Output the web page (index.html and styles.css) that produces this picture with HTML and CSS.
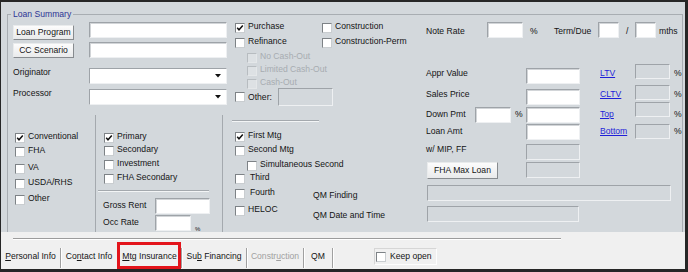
FILE: index.html
```html
<!DOCTYPE html>
<html lang="en">
<head>
    <meta charset="UTF-8">
    <title>Loan Summary</title>
    <link rel="stylesheet" href="styles.css">
</head>
<body>
<div id="window">
    <div id="panel">
        <fieldset id="loan-summary">
            <legend>Loan Summary</legend>
            <div class="columns">

                <div class="col-left">
                    <div class="lrow row-program">
                        <button class="btn program">Loan Program</button>
                        <input class="text wide" type="text">
                    </div>
                    <div class="lrow row-scenario">
                        <button class="btn program">CC Scenario</button>
                        <input class="text wide" type="text">
                    </div>
                    <div class="lrow row-originator">
                        <span class="lbl">Originator</span>
                        <div class="combo"><svg width="6" height="4" viewBox="0 0 6 4"><polygon points="0,0 6,0 3,3.5" fill="#111"/></svg></div>
                    </div>
                    <div class="lrow row-processor">
                        <span class="lbl">Processor</span>
                        <div class="combo"><svg width="6" height="4" viewBox="0 0 6 4"><polygon points="0,0 6,0 3,3.5" fill="#111"/></svg></div>
                    </div>
                    <div class="groups">
                        <div class="loan-type">
                            <div class="check"><span class="box"><svg width="8" height="8" viewBox="0 0 8 8"><polyline points="1.2,3.8 3,5.8 6.8,1.5" fill="none" stroke="#111" stroke-width="1.5"/></svg></span>Conventional</div>
                            <div class="check"><span class="box"></span>FHA</div>
                            <div class="check"><span class="box"></span>VA</div>
                            <div class="check"><span class="box"></span>USDA/RHS</div>
                            <div class="check"><span class="box"></span>Other</div>
                        </div>
                        <div class="occupancy">
                            <div class="occ-list">
                                <div class="check"><span class="box"><svg width="8" height="8" viewBox="0 0 8 8"><polyline points="1.2,3.8 3,5.8 6.8,1.5" fill="none" stroke="#111" stroke-width="1.5"/></svg></span>Primary</div>
                                <div class="check"><span class="box"></span>Secondary</div>
                                <div class="check"><span class="box"></span>Investment</div>
                                <div class="check"><span class="box"></span>FHA Secondary</div>
                            </div>
                            <div class="rule occ-rule"></div>
                            <div class="frow rent-row">
                                <span class="lbl">Gross Rent</span>
                                <input class="text rent" type="text">
                            </div>
                            <div class="frow occ-row">
                                <span class="lbl">Occ Rate</span>
                                <input class="text rate" type="text">
                                <span class="small-pct">%</span>
                            </div>
                        </div>
                    </div>
                </div>

                <div class="col-mid">
                    <div class="mid-top">
                        <div class="purpose">
                            <div class="check"><span class="box"><svg width="8" height="8" viewBox="0 0 8 8"><polyline points="1.2,3.8 3,5.8 6.8,1.5" fill="none" stroke="#111" stroke-width="1.5"/></svg></span>Purchase</div>
                            <div class="check"><span class="box"></span>Refinance</div>
                            <div class="check sub off"><span class="box"></span>No Cash-Out</div>
                            <div class="check sub off"><span class="box"></span>Limited Cash-Out</div>
                            <div class="check sub off"><span class="box"></span>Cash-Out</div>
                            <div class="check other-row"><span class="box"></span><span class="other-lbl">Other:</span><input class="text off other" type="text"></div>
                        </div>
                        <div class="construction">
                            <div class="check"><span class="box"></span>Construction</div>
                            <div class="check"><span class="box"></span>Construction-Perm</div>
                        </div>
                    </div>
                    <div class="rule mid-rule"></div>
                    <div class="mid-bottom">
                        <div class="mtg">
                            <div class="check"><span class="box"><svg width="8" height="8" viewBox="0 0 8 8"><polyline points="1.2,3.8 3,5.8 6.8,1.5" fill="none" stroke="#111" stroke-width="1.5"/></svg></span>First Mtg</div>
                            <div class="check"><span class="box"></span>Second Mtg</div>
                            <div class="check sub"><span class="box"></span>Simultaneous Second</div>
                            <div class="check"><span class="box"></span><span class="pad">Third</span></div>
                            <div class="check"><span class="box"></span><span class="pad">Fourth</span></div>
                            <div class="check"><span class="box"></span>HELOC</div>
                        </div>
                        <div class="qm-labels">
                            <div>QM Finding</div>
                            <div>QM Date and Time</div>
                        </div>
                    </div>
                </div>

                <div class="col-right">
                    <div class="note-row">
                        <span class="lbl note-lbl">Note Rate</span>
                        <input class="text rate" type="text">
                        <span class="lbl note-pct">%</span>
                        <span class="lbl term-lbl">Term/Due</span>
                        <input class="text term" type="text">
                        <span class="lbl slash">/</span>
                        <input class="text term" type="text">
                        <span class="lbl mths">mths</span>
                    </div>
                    <div class="vrow appr">
                        <span class="lbl">Appr Value</span>
                        <input class="text amount" type="text">
                        <a class="link" href="#">LTV</a>
                        <input class="text off ratio" type="text">
                        <span class="lbl ratio-pct">%</span>
                    </div>
                    <div class="vrow sales">
                        <span class="lbl">Sales Price</span>
                        <input class="text amount" type="text">
                        <a class="link" href="#">CLTV</a>
                        <input class="text off ratio" type="text">
                        <span class="lbl ratio-pct">%</span>
                    </div>
                    <div class="vrow down">
                        <span class="lbl down-lbl">Down Pmt</span>
                        <input class="text rate" type="text">
                        <span class="lbl down-pct">%</span>
                        <input class="text amount" type="text">
                        <a class="link" href="#">Top</a>
                        <input class="text off ratio" type="text">
                        <span class="lbl ratio-pct">%</span>
                    </div>
                    <div class="vrow amt">
                        <span class="lbl">Loan Amt</span>
                        <input class="text amount" type="text">
                        <a class="link" href="#">Bottom</a>
                        <input class="text off ratio" type="text">
                        <span class="lbl ratio-pct">%</span>
                    </div>
                    <div class="vrow mip">
                        <span class="lbl">w/ MIP, FF</span>
                        <input class="text off amount" type="text">
                    </div>
                    <div class="vrow fha">
                        <button class="btn fha-btn">FHA Max Loan</button>
                        <input class="text off amount" type="text">
                    </div>
                    <input class="text off qm-long" type="text">
                    <input class="text off qm-short" type="text">
                </div>

            </div>
        </fieldset>
    </div>

    <div id="footer">
        <div class="rule foot-rule"></div>
        <div class="tabs">
            <div class="tab t-personal"><u>P</u>ersonal Info</div>
            <div class="tab t-contact">Co<u>n</u>tact Info</div>
            <div class="tab t-mtg current"><u>M</u>tg Insurance</div>
            <div class="tab t-sub">Su<u>b</u> Financing</div>
            <div class="tab t-constr off">Constr<u>u</u>ction</div>
            <div class="tab t-qm">QM</div>
            <div class="keep"><span class="box"></span>Keep open</div>
        </div>
    </div>
</div>
</body>
</html>
```

FILE: styles.css
```css
* {
    margin: 0;
    box-sizing: border-box;
}

body {
    background-color: #262626;
    font-family: "Liberation Sans", Arial, sans-serif;
    font-size: 8.6px;
    line-height: 11px;
    color: #141414;
}

#window {
    width: 688px;
    height: 272px;
    border-style: solid;
    border-color: #262626;
    border-width: 2px 3px 3px 1px;
    background-color: #f0f0f0;
}

#panel {
    height: 230px;
    overflow: hidden;
    background-color: #d3d8dc;
}

#loan-summary {
    width: 676px;
    height: 260px;
    min-width: 0;
    margin: 7px 0 0 6px;
    padding: 1px 0 0 5px;
    border: 1px solid #a8adb2;
}

#loan-summary legend {
    padding: 0 2px;
    margin-left: -2px;
    line-height: 11px;
    color: #2d3594;
}

.columns {
    display: flex;
}

.col-left {
    width: 214px;
    flex: none;
}

.col-mid {
    width: 194px;
    margin-left: 5px;
    flex: none;
}

.col-right {
    width: 256px;
    flex: none;
}

/* controls */

.text {
    display: block;
    flex: none;
    height: 16px;
    padding: 0;
    border: 1px solid;
    border-color: #9ea3a8 #eef0f2 #eef0f2 #9ea3a8;
    box-shadow: inset 1px 1px 0 #d2d5d8;
    background-color: #fff;
    font: inherit;
}

.text.off {
    background-color: #d3d8dc;
    box-shadow: none;
}

.btn {
    display: block;
    flex: none;
    height: 15px;
    padding: 0;
    border: 1px solid;
    border-color: #e9ebec #878b8f #878b8f #e9ebec;
    background: linear-gradient(#fcfcfc, #e9eaeb);
    font: inherit;
    color: inherit;
}

.combo {
    display: flex;
    justify-content: flex-end;
    align-items: center;
    width: 138px;
    height: 16px;
    padding-right: 5px;
    border: 1px solid;
    border-color: #9ea3a8 #eef0f2 #eef0f2 #9ea3a8;
    background-color: #fff;
}

.check {
    display: flex;
    align-items: flex-start;
    gap: 3px;
    white-space: nowrap;
}

.box {
    display: flex;
    align-items: center;
    justify-content: center;
    width: 10px;
    height: 10px;
    margin-top: 2px;
    flex: none;
    border: 1px solid;
    border-color: #7d8286 #c9cdd0 #c9cdd0 #7d8286;
    background-color: #fff;
}

.check.off {
    color: #a7acb1;
}

.check.off .box {
    background-color: #dde1e4;
    border-color: #b7bcc0 #e4e7e9 #e4e7e9 #b7bcc0;
}

.check.sub {
    padding-left: 12px;
}

.pad {
    padding-left: 2px;
}

.rule {
    height: 2px;
    border-top: 1px solid #a4a9ae;
    border-bottom: 1px solid #f3f5f6;
}

.link {
    color: #1f1fd8;
    text-decoration: underline;
}

/* left column */

.lrow {
    display: flex;
    justify-content: space-between;
    align-items: flex-start;
    height: 16px;
}

.row-program {
    height: 18px;
    margin-top: 1px;
}

.row-program .btn {
    width: 61px;
    margin-top: 3px;
}

.row-scenario {
    margin-top: 2px;
}

.row-scenario .btn {
    width: 61px;
    margin-top: 1px;
}

.row-originator {
    margin-top: 10px;
}

.row-processor {
    margin-top: 5px;
}

.lrow .lbl {
    margin-top: -1px;
}

.wide {
    width: 138px;
}

.groups {
    display: flex;
    height: 130px;
    margin-top: 10px;
}

.loan-type {
    display: grid;
    grid-template-rows: 14px 17px 15px 16px 14px;
    align-content: start;
    width: 82px;
    padding: 16px 0 0 2px;
}

.occupancy {
    width: 128px;
    padding-left: 8px;
    border-left: 1px solid #a4a9ae;
    border-right: 1px solid #a4a9ae;
}

.occ-list {
    display: grid;
    grid-template-rows: 13px 14px 14px 14px;
    padding-top: 16px;
}

.occ-rule {
    width: 111px;
    margin: 4px 0 0 -6px;
}

.frow {
    display: flex;
    align-items: flex-start;
    height: 16px;
}

.frow .lbl {
    width: 52px;
    margin: 2px 0 0 -1px;
}

.rent-row {
    margin-top: 6px;
}

.occ-row {
    margin-top: 1px;
}

.rent {
    width: 55px;
}

.rate {
    width: 36px;
}

.small-pct {
    align-self: flex-end;
    margin: 0 0 -2px 4px;
    font-size: 6px;
    line-height: 7px;
}

/* middle column */

.mid-top {
    display: flex;
}

.purpose {
    display: grid;
    grid-template-rows: 15px 15px 13px 13px 11px 18px;
    width: 90px;
    padding-left: 3px;
}

.other-row {
    align-items: center;
}

.other-row .box {
    margin-top: 0;
}

.other-lbl {
    width: 27px;
}

.other {
    width: 55px;
    height: 18px;
}

.construction {
    display: grid;
    grid-template-rows: 15px 15px;
    align-content: start;
}

.mid-rule {
    width: 87px;
    margin-top: 14px;
}

.mid-bottom {
    display: flex;
    margin-top: 8px;
}

.mtg {
    display: grid;
    grid-template-rows: 14px 15px 13px 15px 17px 14px;
    width: 81px;
    padding-left: 3px;
}

.qm-labels {
    margin-top: 60px;
    white-space: nowrap;
}

.qm-labels div + div {
    margin-top: 9px;
}

/* right column */

.note-row {
    display: flex;
    align-items: flex-start;
    height: 16px;
    margin-top: 1px;
}

.note-row .lbl {
    margin-top: 4px;
}

.note-lbl {
    width: 61px;
}

.note-pct {
    width: 31px;
    padding-left: 7px;
}

.term-lbl {
    width: 44px;
}

.term {
    width: 21px;
}

.slash {
    width: 16px;
    padding-left: 7px;
}

.mths {
    margin-left: 3px;
}

.vrow {
    display: flex;
    align-items: flex-start;
    height: 16px;
}

.vrow .lbl {
    width: 100px;
}

.vrow .link {
    width: 35px;
    margin-left: 20px;
}

.vrow .ratio-pct {
    width: auto;
    margin-left: 4px;
}

.amount {
    width: 54px;
}

.ratio {
    width: 35px;
    height: 15px;
}

.appr {
    margin-top: 30px;
}

.sales {
    margin-top: 5px;
}

.down {
    margin-top: 2px;
}

.amt {
    margin-top: 1px;
}

.mip {
    margin-top: 4px;
}

.fha {
    height: 17px;
    margin-top: 2px;
}

.appr .ratio,
.sales .ratio {
    margin-top: -4px;
}

.down .ratio {
    margin-top: -5px;
}

.down .lbl,
.amt .lbl,
.down .link,
.amt .link {
    margin-top: 2px;
}

.vrow .down-lbl {
    width: 49px;
}

.vrow .down-pct {
    width: 15px;
    padding-left: 4px;
}

.fha-btn {
    width: 71px;
    height: 17px;
    margin-left: 1px;
}

.fha .amount {
    margin-left: 28px;
}

.qm-long {
    width: 244px;
    margin: 6px 0 0 1px;
}

.qm-short {
    width: 152px;
    margin: 5px 0 0 1px;
}

/* footer tabs */

#footer {
    height: 37px;
}

.foot-rule {
    width: 548px;
    margin: 6px 0 0 12px;
    border-top-color: #9c9c9c;
    border-bottom-color: #fff;
}

.tabs {
    display: flex;
    height: 20px;
    margin-top: 8px;
}

.tab {
    position: relative;
    flex: none;
    padding-top: 3px;
    text-align: center;
    white-space: nowrap;
    border-right: 1px solid #a0a0a0;
    box-shadow: 1px 0 0 #fff;
}

.tab.off {
    color: #a0a0a0;
}

.t-personal { width: 60px; }
.t-contact { width: 57px; }
.t-mtg { width: 64px; }
.t-sub { width: 65px; }
.t-constr { width: 57px; }
.t-qm { width: 29px; }

.tab.current::after {
    content: "";
    position: absolute;
    left: -1px;
    right: 0;
    top: -6px;
    bottom: -1px;
    border: 3px solid #e3141b;
}

.keep {
    display: flex;
    align-items: center;
    gap: 4px;
    width: 63px;
    height: 17px;
    margin-left: 41px;
    padding-left: 1px;
    border: 1px solid;
    border-color: #d6d6d6 #fdfdfd #fdfdfd #d6d6d6;
}

.keep .box {
    margin-top: 0;
}
```
